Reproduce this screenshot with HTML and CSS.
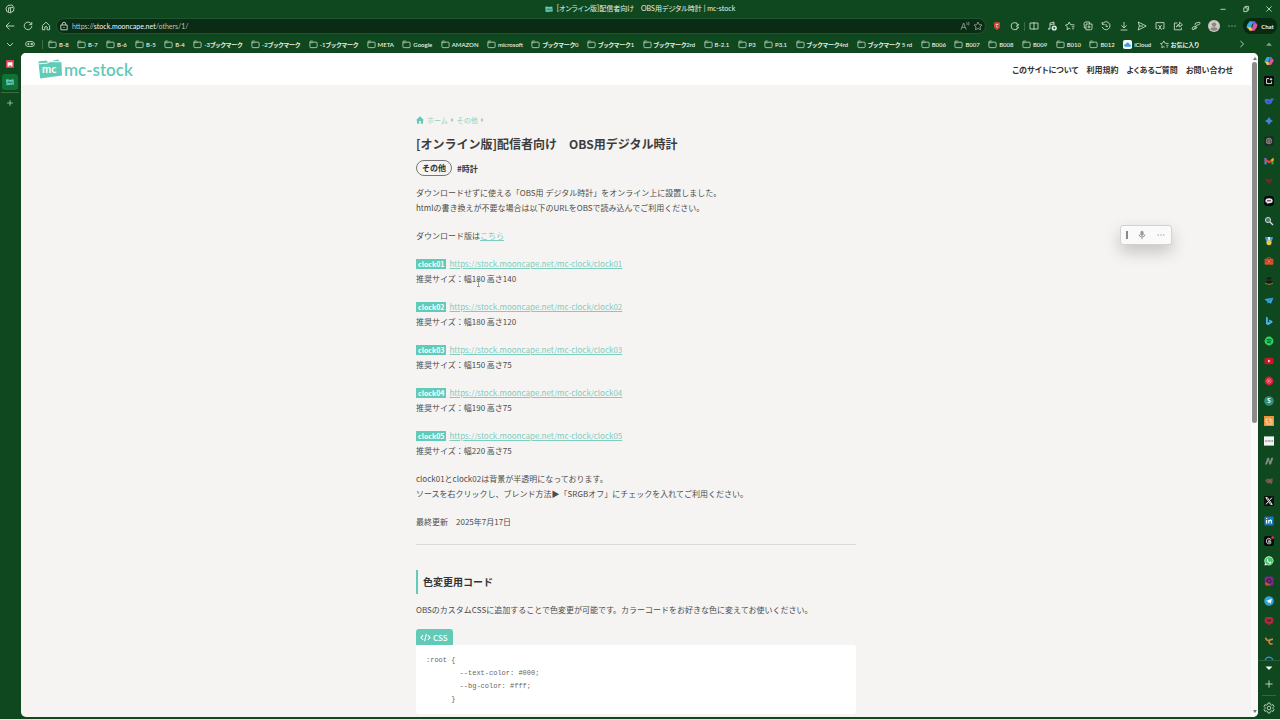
FILE: index.html
```html
<!DOCTYPE html>
<html lang="ja">
<head>
  <meta charset="UTF-8">
  <meta name="viewport" content="width=device-width, initial-scale=1.0">
  <title>[オンライン版]配信者向け　OBS用デジタル時計 | mc-stock</title>
  <link rel="stylesheet" href="styles.css">
</head>
<body>
  <svg class="defs" aria-hidden="true">
    <symbol id="folder" viewBox="0 0 10 10"><path d="M1 3V2.2Q1 1.2 2 1.2H3.8L5 2.4H8Q9 2.4 9 3.4V7.4Q9 8.5 8 8.5H2Q1 8.5 1 7.4V3H3.8L5 2.4"/></symbol>
    <symbol id="star" viewBox="0 0 10 10"><path d="M5 1L6.2 3.6L9 4L7 6L7.5 8.8L5 7.4L2.5 8.8L3 6L1 4L3.8 3.6Z"/></symbol>
    <symbol id="starlist" viewBox="0 0 10 10"><path d="M7 3.8L5.4 3.5L4.2 1L3 3.5L.5 4L2.4 5.9L2 8.7L4.2 7.4L5.4 8M6.8 3.8H9.5M6.8 5.8H9.5M7.2 7.8H9"/></symbol>
    <symbol id="mc" viewBox="0 0 10 8"><path fill="#62cbb8" d="M0 1L3 .6L4 1.4L9.4 .6L10 7.2L.6 8Z"/><path fill="none" stroke="#0f5a3a" stroke-width=".7" d="M2.4 5.6V4Q3.4 3 4 4V5.6M4 4Q5 3 5.6 4V5.6M8.4 4Q6.6 3.4 6.8 4.8Q7 6 8.4 5.2"/></symbol>
  </svg>

  <header class="titlebar">
    <svg class="icon workspace" viewBox="0 0 10 10"><path d="M3 1.4L7 1L9 3.6L8.6 7L5 9L1.6 7.4L1 4ZM3 4L8 3.4M3.6 4V8M5.6 4V8.4"/></svg>
    <div class="window-title"><svg class="favicon"><use href="#mc"/></svg><span>[オンライン版]配信者向け　OBS用デジタル時計 | mc-stock</span></div>
    <div class="window-buttons">
      <button aria-label="最小化"><svg class="icon" viewBox="0 0 10 10"><path d="M2.4 5.3H7.6"/></svg></button>
      <button aria-label="元に戻す"><svg class="icon" viewBox="0 0 10 10"><path d="M2.8 3.8H6.2V7.6H2.8ZM4 3.6V2.4H7.6V6.2H6.4"/></svg></button>
      <button aria-label="閉じる"><svg class="icon" viewBox="0 0 10 10"><path d="M2.4 2.4L7.6 7.6M7.6 2.4L2.4 7.6"/></svg></button>
    </div>
  </header>

  <div class="toolbar">
    <button aria-label="戻る"><svg class="icon" viewBox="0 0 10 10"><path d="M9.4 5H1M4.5 1.5L1 5L4.5 8.5"/></svg></button>
    <button aria-label="更新"><svg class="icon" viewBox="0 0 10 10"><path d="M8.5 3.4A3.8 3.8 0 1 0 8.8 5M8.8 1V3.6H6.2"/></svg></button>
    <button aria-label="ホーム"><svg class="icon" viewBox="0 0 10 10"><path d="M1.4 4.6L5 1.2L8.6 4.6V8.8H6.2V6Q5 5 3.8 6V8.8H1.4Z"/></svg></button>
    <div class="address">
      <svg class="icon" viewBox="0 0 10 10"><path d="M1.8 4H8.2V8.8H1.8ZM3.2 4V3Q3.4 1.2 5 1.2Q6.6 1.2 6.8 3V4M5 6V7"/></svg>
      <span class="url">https://<b>stock.mooncape.net</b>/others/1/</span>
      <svg class="icon dim" viewBox="0 0 10 10"><path d="M1 8.6L3.6 2L6.2 8.6M2 6.4H5.2M6.4 1.4Q7.6 2.6 7 4M8 .8Q9.6 2.4 8.8 4.4"/></svg>
      <svg class="icon dim"><use href="#star"/></svg>
    </div>
    <button aria-label="広告ブロック"><svg class="icon" viewBox="0 0 10 10"><path class="solid" fill="#c8463a" d="M2 1.6L5 1L8 1.6V6Q7 8.4 5 9Q3 8.4 2 6Z"/><path stroke="#f0d0b8" d="M3.6 3.4H6.4M4 5.4L6 6.4M6 2.8L4.4 4.6"/></svg></button>
    <button aria-label="拡張機能"><svg class="icon" viewBox="0 0 10 10"><path d="M6.8 3.4L6.6 1.8H3.4Q1.2 2 1.2 5Q1.2 8.4 3.8 8.6H6.8V7M7 3.4Q8.8 2.4 8.8 4Q8 4.6 6.8 4.6V6L8.6 6.2Q8.4 7.6 7 7.2"/></svg></button>
    <i class="divider"></i>
    <button aria-label="画面分割"><svg class="icon" viewBox="0 0 10 10"><path d="M1 2H9V8H1ZM5 1V9"/></svg></button>
    <button aria-label="メディア"><svg class="icon" viewBox="0 0 10 10"><path d="M3 7.5V2L7 1V4M3 3.8L7 2.8M1.2 8.2Q1.6 6.6 3 7.6Q2.6 9 1.2 8.2"/><circle class="solid" cx="7.2" cy="7" r="2.6" fill="#e8f3ea"/><path class="plus" d="M6 7H8.4M7.2 5.8V8.2"/></svg></button>
    <button aria-label="お気に入り"><svg class="icon"><use href="#starlist"/></svg></button>
    <button aria-label="コレクション"><svg class="icon" viewBox="0 0 10 10"><path d="M3 3H9V7.4Q9 8.8 7.6 8.8H3ZM3 7H1.4L1 2.4L2 1H6.6V3M6 4.4V7.4M4.5 5.9H7.5"/></svg></button>
    <button aria-label="履歴"><svg class="icon" viewBox="0 0 10 10"><path d="M1.4 3A4 4 0 1 1 1.2 6M1.2 1V3.4H3.6M5 3V5.4H7"/></svg></button>
    <button aria-label="ダウンロード"><svg class="icon" viewBox="0 0 10 10"><path d="M5 1V6.6M2.4 4.4L5 7L7.6 4.4M1.6 9H8.4"/></svg></button>
    <button aria-label="送信"><svg class="icon" viewBox="0 0 10 10"><path d="M1.2 1L9.2 5L1.2 9L2.4 5ZM2.4 5H6"/></svg></button>
    <button aria-label="スクリーンショット"><svg class="icon" viewBox="0 0 10 10"><path d="M2.4 7.6H1V1.6H9V7.6H7.6M3.4 4L6.6 8.8M6.6 4L3.4 8.8"/></svg></button>
    <button aria-label="共有"><svg class="icon" viewBox="0 0 10 10"><path d="M4.4 2H1.4V8.8H8.4V6.6M3.4 6Q4 3.4 6.6 3.2V1.2L9.4 3.8L6.6 6V4.6Q4.4 4.4 3.4 6"/></svg></button>
    <button aria-label="リンク"><svg class="icon" viewBox="0 0 10 10"><path d="M4.8 4.4L4 3.2Q4.2 1.6 6 1.8L8.6 1.2Q9.6 2 8.4 3.4L5.6 4.4L3 8.2Q1.4 9.2 1 8Q1 6 3.4 5.4L6 6.4Q5.6 8 3.4 8"/></svg></button>
    <button aria-label="プロフィール"><svg class="avatar" viewBox="0 0 12 12"><circle cx="6" cy="6" r="6" fill="#cfcac6"/><circle cx="6" cy="4.6" r="2.2" fill="#8c8783"/><path fill="#8c8783" d="M2.4 9.6Q2.6 7.2 6 7.2Q9.4 7.2 9.6 9.6Q6 12 2.4 9.6Z"/></svg></button>
    <button aria-label="設定など"><svg class="icon" viewBox="0 0 10 10"><path d="M1.4 5H2.6M4.4 5H5.6M7.4 5H8.6"/></svg></button>
    <button class="chat"><svg class="copilot" viewBox="0 0 10 10"><path fill="#35a9e0" d="M3 1H6L4 7H1Q0 6 1 4Z"/><path fill="#f6c945" d="M1 6H4.6L5.4 9H3.4Q2.4 9 2 7Z"/><path fill="#e0569b" d="M7 9H4.6L6 3H9Q10 4 9 6Z"/><path fill="#6f62e8" d="M6 1H7Q8 1 8.4 3L6.4 4L5 3Z"/></svg>Chat</button>
  </div>

  <nav class="bookmarks">
    <button class="chevron" aria-label="タブ"><svg class="icon" viewBox="0 0 10 10"><path d="M2 4L5 7L8 4"/></svg></button>
    <svg class="icon game" viewBox="0 0 10 10"><path d="M2.6 2.6H7.4Q9.4 3 9.4 5.4Q9 7.6 7 7.4H3Q1 7.6 .6 5.4Q.6 3 2.6 2.6ZM2.4 5H4.4M3.4 4V6M6 4.4H7.6V5.6H6Z"/></svg>
    <i class="divider"></i>
    <div class="bookmark-list">
      <a href="#"><svg class="icon"><use href="#folder"/></svg>B-8</a>
      <a href="#"><svg class="icon"><use href="#folder"/></svg>B-7</a>
      <a href="#"><svg class="icon"><use href="#folder"/></svg>B-6</a>
      <a href="#"><svg class="icon"><use href="#folder"/></svg>B-5</a>
      <a href="#"><svg class="icon"><use href="#folder"/></svg>B-4</a>
      <a href="#"><svg class="icon"><use href="#folder"/></svg>-3ブックマーク</a>
      <a href="#"><svg class="icon"><use href="#folder"/></svg>-2ブックマーク</a>
      <a href="#"><svg class="icon"><use href="#folder"/></svg>-1ブックマーク</a>
      <a href="#"><svg class="icon"><use href="#folder"/></svg>META</a>
      <a href="#"><svg class="icon"><use href="#folder"/></svg>Google</a>
      <a href="#"><svg class="icon"><use href="#folder"/></svg>AMAZON</a>
      <a href="#"><svg class="icon"><use href="#folder"/></svg>microsoft</a>
      <a href="#"><svg class="icon"><use href="#folder"/></svg>ブックマーク0</a>
      <a href="#"><svg class="icon"><use href="#folder"/></svg>ブックマーク1</a>
      <a href="#"><svg class="icon"><use href="#folder"/></svg>ブックマーク2rd</a>
      <a href="#"><svg class="icon"><use href="#folder"/></svg>B-2.1</a>
      <a href="#"><svg class="icon"><use href="#folder"/></svg>P3</a>
      <a href="#"><svg class="icon"><use href="#folder"/></svg>P3.1</a>
      <a href="#"><svg class="icon"><use href="#folder"/></svg>ブックマーク4rd</a>
      <a href="#"><svg class="icon"><use href="#folder"/></svg>ブックマーク 5 rd</a>
      <a href="#"><svg class="icon"><use href="#folder"/></svg>B006</a>
      <a href="#"><svg class="icon"><use href="#folder"/></svg>B007</a>
      <a href="#"><svg class="icon"><use href="#folder"/></svg>B008</a>
      <a href="#"><svg class="icon"><use href="#folder"/></svg>B009</a>
      <a href="#"><svg class="icon"><use href="#folder"/></svg>B010</a>
      <a href="#"><svg class="icon"><use href="#folder"/></svg>B012</a>
      <a href="#"><svg class="cloud" viewBox="0 0 10 10"><rect width="10" height="10" rx="2" fill="#f4f8fb"/><path fill="#3f9fe0" d="M2.4 7.6Q.8 7 1.4 5.4Q2 4.4 3 4.6Q4 2.4 6 3Q7.2 3.6 7.2 4.8Q9 5 8.8 6.6Q8.4 7.6 7.6 7.6Z"/></svg>iCloud</a>
      <a href="#"><svg class="icon"><use href="#starlist"/></svg>お気に入り</a>
    </div>
    <button class="more" aria-label="その他のブックマーク"><svg class="icon" viewBox="0 0 10 10"><path d="M3.4 2L6.6 5L3.4 8"/></svg></button>
    <button class="up" aria-label="上へ"><svg class="icon" viewBox="0 0 10 10"><path class="solid" fill="#7fa287" d="M2 6.8L5 3.4L8 6.8Z"/></svg></button>
  </nav>

  <div class="workspace-row">
    <aside class="tabs">
      <button aria-label="タブ1"><svg viewBox="0 0 10 10"><rect width="10" height="10" rx="1" fill="#d8414d"/><path fill="#fff" d="M2 2.4L4 3.2L5 2.4L6 3.2L8 2.4V8H6.4V6.4H5.6V8H4.4V6.4H3.6V8H2Z"/></svg></button>
      <button class="active" aria-label="mc-stock"><svg class="tab-logo"><use href="#mc"/></svg></button>
      <button class="new" aria-label="新しいタブ"><svg class="icon" viewBox="0 0 10 10"><path d="M5 1.4V8.6M1.4 5H8.6"/></svg></button>
    </aside>

    <div class="view">
      <div class="page">
        <div class="site-header">
          <a class="logo" href="#">
            <svg viewBox="0 0 24 20"><path fill="#62cbb8" d="M.4 2.6L8 1.4L10 3L19.6 .6L22.2 2.6L23.4 3L24 16.4L2.2 19.4Z"/><path fill="none" stroke="#fff" d="M1 4.8L9.6 4L12 2.6L22.6 2.8"/><text x="4" y="14">mc</text></svg>
            <span>mc-stock</span>
          </a>
          <nav class="site-nav">
            <a href="#">このサイトについて</a>
            <a href="#">利用規約</a>
            <a href="#">よくあるご質問</a>
            <a href="#">お問い合わせ</a>
          </nav>
        </div>

        <main>
          <nav class="breadcrumb">
            <svg viewBox="0 0 10 10"><path d="M5 .4L10 5.2H8.8V9.6H6V6.4H4V9.6H1.2V5.2H0Z"/></svg>
            <a href="#">ホーム</a><i></i>
            <a href="#">その他</a><i></i>
          </nav>
          <h1>[オンライン版]配信者向け　OBS用デジタル時計</h1>
          <div class="tags"><a class="category" href="#">その他</a><a href="#">#時計</a></div>

          <div class="entry">
            <p>ダウンロードせずに使える「OBS用 デジタル時計」をオンライン上に設置しました。<br>htmlの書き換えが不要な場合は以下のURLをOBSで読み込んでご利用ください。</p>
            <p>ダウンロード版は<a href="#">こちら</a></p>
            <p><span class="label">clock01</span><a href="#">https://stock.mooncape.net/mc-clock/clock01</a><br>推奨サイズ：幅180 高さ140</p>
            <p><span class="label">clock02</span><a href="#">https://stock.mooncape.net/mc-clock/clock02</a><br>推奨サイズ：幅180 高さ120</p>
            <p><span class="label">clock03</span><a href="#">https://stock.mooncape.net/mc-clock/clock03</a><br>推奨サイズ：幅150 高さ75</p>
            <p><span class="label">clock04</span><a href="#">https://stock.mooncape.net/mc-clock/clock04</a><br>推奨サイズ：幅190 高さ75</p>
            <p><span class="label">clock05</span><a href="#">https://stock.mooncape.net/mc-clock/clock05</a><br>推奨サイズ：幅220 高さ75</p>
            <p>clock01とclock02は背景が半透明になっております。<br>ソースを右クリックし、ブレンド方法▶「SRGBオフ」にチェックを入れてご利用ください。</p>
            <p>最終更新　2025年7月17日</p>
          </div>

          <hr>

          <h2>色変更用コード</h2>
          <p>OBSのカスタムCSSに追加することで色変更が可能です。カラーコードをお好きな色に変えてお使いください。</p>
          <div class="code-tab"><svg viewBox="0 0 12 10"><path d="M3.4 2.4L1 5L3.4 7.6M8.6 2.4L11 5L8.6 7.6M7 1L5 9"/></svg>CSS</div>
          <pre>:root {
        --text-color: #000;
        --bg-color: #fff;
      }</pre>
        </main>
      </div>
      <div class="scrollbar"><i class="arrow-up"></i><div class="thumb"></div><i class="arrow-down"></i></div>
    </div>

    <aside class="sidebar">
      <div class="apps">
        <svg viewBox="0 0 10 10"><path fill="#35a9e0" d="M3 1H6L4 7H1Q0 6 1 4Z"/><path fill="#f6c945" d="M1 6H4.6L5.4 9H3.4Q2.4 9 2 7Z"/><path fill="#e0569b" d="M7 9H4.6L6 3H9Q10 4 9 6Z"/><path fill="#6f62e8" d="M6 1H7Q8 1 8.4 3L6.4 4L5 3Z"/></svg>
        <svg viewBox="0 0 10 10"><rect width="10" height="10" rx="1" fill="#080d0a"/><path fill="none" stroke="#ddd" d="M5 2.6H2.6V7.6H7.6V5.4"/><path fill="#fff" d="M7 1.6L7.5 2.8L8.6 3.3L7.5 3.8L7 5L6.5 3.8L5.4 3.3L6.5 2.8Z"/></svg>
        <svg viewBox="0 0 10 10"><path fill="#3d68d8" d="M.6 3.6Q3 1.8 5.8 3.4Q7 4 7.2 2L8.4 2.6L9.8 2Q9.6 4.4 8.4 5Q8 8.6 4.6 8.4Q.4 8 .6 3.6Z"/><path fill="#164b42" d="M3 5Q4.8 4.6 5.8 6.6Q4 6.6 3 5Z"/></svg>
        <svg viewBox="0 0 10 10"><path fill="#4285d8" d="M5 1L6.6 3.4L9 5L6.6 6.6L5 9L3.4 6.6L1 5L3.4 3.4Z"/></svg>
        <svg viewBox="0 0 10 10"><rect x=".5" y=".5" width="9" height="9" rx="1" fill="#1c2820"/><circle cx="5" cy="5" r="3.2" fill="#858b83"/><path fill="none" stroke="#283129" stroke-width=".5" d="M3 4L5 3L7 4V6L5 7L3 6ZM3 4L7 6"/></svg>
        <svg viewBox="0 0 10 10"><path fill="#4285f4" d="M.5 2H2.6V8.4H.5Z"/><path fill="#34a853" d="M7.4 3H9.5V8.4H7.4Z"/><path fill="#ea4335" d="M.5 2L5 5L9.5 2V4.4L5 7.4L.5 4.4Z"/><path fill="#fbbc04" d="M7.4 3.2L9.5 1.8V4.4L7.4 5.6Z"/></svg>
        <svg viewBox="0 0 10 10"><path fill="#7a2430" d="M1 2.4L4 3L5 4L6 3L9 2.4L7.6 5L5 8L2.4 5Z"/></svg>
        <svg viewBox="0 0 10 10"><rect width="10" height="10" rx="3" fill="#0a0a0c"/><path fill="#eee7f0" d="M2 3Q5 1.4 8 3Q9.4 5 8 6.6Q6.4 7.4 5 7L3.4 8.2V7Q1 6.4 1.4 4.4Z"/><path stroke="#333" d="M3 4.8H7"/></svg>
        <svg viewBox="0 0 10 10"><circle cx="4" cy="4" r="2.6" fill="#4a7d78" stroke="#c6d3cd"/><path stroke="#d5ded7" stroke-width="1.4" d="M6 6L9 9"/></svg>
        <svg viewBox="0 0 10 10"><path fill="#3d9ce8" d="M1 1H4L5 4L6 1H9L8 5H2Z"/><path fill="#f2f6f8" d="M4 1H6L5.8 4H4.2Z"/><circle cx="5" cy="6.6" r="2.6" fill="#f0c64a"/></svg>
        <svg viewBox="0 0 10 10"><path fill="none" stroke="#b64429" d="M3.4 3V1.6H6.6V3"/><rect x=".6" y="2.8" width="8.8" height="6" rx="1" fill="#d5532f"/><path stroke="#8b2f20" stroke-width=".5" d="M.6 5.4H9.4"/><path stroke="#f3d0c0" d="M4.4 5.6H5.6"/></svg>
        <svg viewBox="0 0 10 10"><path fill="#151914" d="M2.4 4L3 1.4H7L7.6 4V7H2.4Z"/><path fill="none" stroke="#8a7430" d="M1 7.4Q5 9.6 9 7.4"/><path stroke="#403c28" d="M2 4H8"/></svg>
        <svg viewBox="0 0 10 10"><path fill="#38a7df" d="M.4 3L9.4 1.8L7 7.8L4.6 6.4L3.8 7.8L3 5.6Z"/><path stroke="#1474a6" stroke-width=".6" d="M3 5.4L7.4 3.2"/></svg>
        <svg viewBox="0 0 10 10"><path fill="#48b3ee" d="M2 .8L3.8 1.4V6.4L6 5.6L4.8 4.6L4.4 3.4L8.4 5V6.6L4 9.2L2 8Z"/></svg>
        <svg viewBox="0 0 10 10"><circle cx="5" cy="5" r="4.4" fill="#2bd566"/><path fill="none" stroke="#0b3c1b" stroke-width=".8" d="M2.4 3.6Q5.4 2.8 7.8 4M2.8 5.2Q5 4.6 7.2 5.6M3 6.6Q5 6.2 6.6 7"/></svg>
        <svg viewBox="0 0 10 10"><rect x=".4" y="1.8" width="9.2" height="6.4" rx="1.6" fill="#c71624"/><path fill="#fff" d="M4.2 3.6L6.4 5L4.2 6.4Z"/></svg>
        <svg viewBox="0 0 10 10"><circle cx="5" cy="5" r="4.4" fill="#d61d35"/><circle cx="5" cy="5" r="2.2" fill="none" stroke="#f1a9af" stroke-width=".6"/><path fill="#fff" d="M4.4 4L6 5L4.4 6Z"/></svg>
        <svg viewBox="0 0 10 10"><circle cx="5" cy="5" r="4.8" fill="#2f9080"/><text x="3" y="7">S</text></svg>
        <svg viewBox="0 0 10 10"><rect width="10" height="10" fill="#e9963b"/><path fill="none" stroke="#fff3e4" stroke-width=".8" d="M4.4 3H2V6H4.4M6 2V6M8.6 4H6.4M6.4 6H8.8M2 8H8.6"/></svg>
        <svg viewBox="0 0 10 10"><rect y=".4" width="10" height="9.2" fill="#f2f4f2"/><path stroke="#59625b" stroke-dasharray="1 .4" d="M1 5H9"/></svg>
        <svg viewBox="0 0 10 10"><path fill="#838b85" d="M1 8.4L3.4 1.8H5L5.8 5.8L7.2 1.8H9.4L7 8.4H5.2L4.4 4.6L3 8.4Z"/></svg>
        <svg viewBox="0 0 10 10"><path fill="#70594b" d="M1 4L4 2.4L6 3L8.4 2L8.8 5L7.6 8.4L6 7L3.4 7.4Z"/><path stroke="#c35d55" d="M5 4.6L7.4 6.4"/></svg>
        <svg viewBox="0 0 10 10"><rect width="10" height="10" rx="1" fill="#0b120e"/><path fill="none" stroke="#f2f2f2" d="M1.8 1.6H3.4L8.2 8.4H6.6ZM8 1.6L5.6 4.4M4.4 5.6L2 8.4"/></svg>
        <svg viewBox="0 0 10 10"><rect x=".4" y=".4" width="9.2" height="9.2" rx="1" fill="#1978b8"/><path fill="none" stroke="#fff" stroke-width="1.2" d="M2.6 4V7.6M2.6 2V3M4.8 7.6V4M4.8 5Q7.6 3 7.4 5.4V7.6"/></svg>
        <svg viewBox="0 0 10 10"><rect width="10" height="10" rx="2" fill="#080a09"/><path fill="none" stroke="#eee" stroke-width=".8" d="M7 4Q6.4 2 4.6 2.2Q2.4 2.6 2.4 5Q2.6 8 5 8Q7.6 7.6 7 5.8Q6 4.4 4.4 5.2Q3.8 6.4 5 6.6Q6.4 6.4 6 4.6Q5.4 3.4 4.2 4"/><circle cx="8.6" cy="1.6" r="1.5" fill="#cc3448"/></svg>
        <svg viewBox="0 0 10 10"><path fill="#d9f2df" d="M.4 9.6L1 7.2A4.6 4.6 0 1 1 3 9Z"/><circle cx="5" cy="5" r="3.8" fill="#39cb62"/><path fill="#fff" d="M3.6 2.6L4.4 4L4 4.8Q4.6 6 5.6 6.2L6.2 5.6L7.6 6.2Q7 7.6 5.6 7.4Q3 6.8 2.8 4Z"/></svg>
        <svg viewBox="0 0 10 10"><rect x=".6" y=".6" width="8.8" height="8.8" rx="2" fill="#792b88"/><path fill="#d0502f" d="M1.4 6.4Q5 6 6.4 9.4H2.4Q1 9 1.4 6.4Z"/><circle cx="5" cy="5" r="2" fill="none" stroke="#271f32"/></svg>
        <svg viewBox="0 0 10 10"><circle cx="5" cy="5" r="4.8" fill="#2ea6dd"/><path fill="#fff" d="M1.8 5L7.8 2.8L6.8 7.4L5 6.2L4.2 7L4 5.6Z"/></svg>
        <svg viewBox="0 0 10 10"><path fill="#aa2c3a" d="M2 1H8L9.6 3.4L9 7L6.4 8L5 9.4L3.6 8L1 7L.4 3.4Z"/><path fill="#5f1a28" d="M2.6 3L5 4L7.4 3L6.4 5.4H3.6Z"/></svg>
        <svg viewBox="0 0 10 10"><path fill="none" stroke="#cf8747" stroke-width="1.6" d="M1.6 1.6Q2 4.4 5 4.6M9 3.4Q5.4 3 5 6Q5.4 8.6 8.6 7.8"/></svg>
        <svg viewBox="0 0 10 10"><circle cx="5" cy="5" r="3.8" fill="#123047" stroke="#3190c4" stroke-width="1.4"/></svg>
      </div>
      <div class="sidebar-footer">
        <svg viewBox="0 0 10 10"><path fill="#fff" d="M1.6 3.4H8.4L5 7Z"/></svg>
        <svg class="icon" viewBox="0 0 10 10"><path d="M5 1.4V8.6M1.4 5H8.6"/></svg>
        <i></i>
        <svg class="icon gear" viewBox="0 0 12 12"><path d="M5 1H7L7.4 2.6L8.6 3.2L10 2.6L11 4.4L10 5.4V6.6L11 7.6L10 9.4L8.6 8.8L7.4 9.4L7 11H5L4.6 9.4L3.4 8.8L2 9.4L1 7.6L2 6.6V5.4L1 4.4L2 2.6L3.4 3.2L4.6 2.6Z"/><circle cx="6" cy="6" r="1.8"/></svg>
      </div>
    </aside>
  </div>

  <div class="voice-bar">
    <i></i>
    <button aria-label="マイク"><svg viewBox="0 0 10 10"><rect x="3.4" y=".8" width="3.2" height="5" rx="1.6" fill="#999"/><path fill="none" stroke="#999" d="M2 4.4Q2.2 7 5 7Q7.8 7 8 4.4M5 7V9.2"/></svg></button>
    <button aria-label="メニュー"><svg viewBox="0 0 10 10"><path fill="#999" d="M1.6 4.5H3V5.5H1.6ZM4.3 4.5H5.7V5.5H4.3ZM7 4.5H8.4V5.5H7Z"/></svg></button>
  </div>
  <svg class="cursor" viewBox="0 0 5 8"><path d="M1 .5H4M2.5 .5V7.5M1 7.5H4"/></svg>
</body>
</html>
```

FILE: styles.css
```css
* {
  box-sizing: border-box;
}
body {
  margin: 0;
  height: 100vh;
  display: flex;
  flex-direction: column;
  overflow: hidden;
  background-color: #0f471e;
  border-bottom: 1px solid #dfe8e0;
  color: #4c4c4c;
  font-family: "Noto Sans CJK JP", sans-serif;
  font-size: 8px;
  line-height: 15px;
}
a {
  color: inherit;
  text-decoration: none;
}
button {
  display: flex;
  align-items: center;
  justify-content: center;
  padding: 0;
  border: none;
  background: none;
  color: inherit;
  font: inherit;
  cursor: pointer;
}
svg {
  display: block;
  flex: none;
  width: 10px;
  height: 10px;
}
.defs {
  position: absolute;
  width: 0;
  height: 0;
}
.icon {
  fill: none;
  stroke: #c3dcc8;
  stroke-width: 0.9;
}
.icon .solid {
  stroke: none;
}
.icon .plus {
  stroke: #0f471e;
}
.divider {
  width: 1px;
  height: 9px;
  background-color: #3b6a46;
}

/* browser frame */
.titlebar,
.toolbar,
.bookmarks {
  display: flex;
  align-items: center;
  flex: none;
  color: #e6f1e8;
  font-family: Lato, "Noto Sans CJK JP", sans-serif;
  font-feature-settings: "palt";
}
.titlebar {
  height: 17px;
  padding-left: 5px;
}
.window-title {
  flex: 1;
  display: flex;
  align-items: center;
  justify-content: center;
  gap: 4px;
  padding-left: 54px;
  font-size: 7px;
}
.favicon {
  width: 8px;
  height: 6px;
}
.window-buttons {
  display: flex;
}
.window-buttons button {
  width: 23px;
  height: 17px;
}
.toolbar {
  height: 18px;
  padding: 0 3px 0 1px;
}
.toolbar button {
  width: 18px;
  height: 18px;
}
.address {
  flex: 1;
  display: flex;
  align-items: center;
  gap: 3px;
  height: 16px;
  margin: 0 2px 0 1px;
  padding: 0 2px;
  border: 1px solid #1f5430;
  border-radius: 8px;
  background-color: #0a2b14;
}
.url {
  flex: 1;
  color: #b8c9bc;
  font-size: 7px;
}
.url b {
  color: #f3f8f4;
  font-weight: normal;
}
.dim {
  stroke: #8aa08f;
}
.avatar {
  width: 12px;
  height: 12px;
}
.toolbar .chat {
  width: 34px;
  height: 16px;
  margin-left: 2px;
  gap: 3px;
  border-radius: 8px;
  background-color: #082a11;
  font-size: 6px;
  font-weight: bold;
}
.copilot {
  width: 12px;
  height: 12px;
}
.bookmarks {
  height: 18px;
}
.chevron {
  width: 20px;
  height: 18px;
}
.game {
  margin: 0 7px 0 5px;
}
.bookmark-list {
  flex: 1;
  display: flex;
  justify-content: space-between;
  padding: 0 34px 0 5px;
  font-size: 6px;
  font-weight: 600;
  white-space: nowrap;
}
.bookmark-list a {
  display: flex;
  align-items: center;
  gap: 2px;
}
.bookmark-list a svg {
  width: 9px;
  height: 9px;
}
.more {
  width: 17px;
}
.up {
  width: 22px;
  margin-left: 8px;
}

/* tabs on the left */
.workspace-row {
  flex: 1;
  display: flex;
  min-height: 0;
  padding-bottom: 2px;
}
.tabs {
  width: 21px;
  display: flex;
  flex-direction: column;
  align-items: center;
  padding: 3px 3px 0 2px;
}
.tabs button {
  width: 16px;
  height: 16px;
}
.tabs button svg {
  width: 8px;
  height: 8px;
}
.tabs .active {
  margin: 2px 0;
  border-radius: 3px;
  background-color: #0f7338;
}
.tabs .new {
  width: 18px;
  height: 20px;
  border-top: 1px solid #3d6b48;
}

/* web page */
.view {
  flex: 1;
  display: flex;
  min-width: 0;
  border-radius: 5px;
  overflow: hidden;
  background-color: #f5f4f2;
}
.page {
  flex: 1;
  overflow: hidden;
}
.site-header {
  display: flex;
  align-items: center;
  justify-content: space-between;
  height: 32px;
  padding: 0 18px 0 17px;
  background-color: #fff;
}
.logo {
  display: flex;
  align-items: center;
  gap: 2px;
  color: #62c8b5;
  font-family: Lato, sans-serif;
  font-size: 17px;
  font-weight: 600;
}
.logo svg {
  width: 24px;
  height: 20px;
}
.logo text {
  fill: #fff;
  font-size: 11px;
  font-weight: bold;
}
.site-nav {
  display: flex;
  gap: 8px;
  color: #333;
  font-feature-settings: "palt";
  font-weight: bold;
}
main {
  width: 440px;
  margin: 0 auto;
  padding-top: 29px;
}
.breadcrumb {
  display: flex;
  align-items: center;
  gap: 3px;
  color: #8fd0c3;
  font-size: 7px;
  line-height: 12px;
}
.breadcrumb svg {
  width: 8px;
  height: 8px;
  fill: #62cbb8;
}
.breadcrumb i {
  border: 2px solid transparent;
  border-left: 3px solid #9bcfc5;
  border-right: none;
}
h1 {
  margin: 9px 0 7px;
  color: #3d3d3d;
  font-size: 12px;
  line-height: 18px;
}
.tags {
  display: flex;
  align-items: center;
  gap: 5px;
  margin-bottom: 9px;
  color: #333;
  font-weight: bold;
}
.category {
  padding: 0 5px;
  border: 1px solid #777;
  border-radius: 8px;
  line-height: 14px;
}
p {
  margin: 0;
}
.entry {
  display: flex;
  flex-direction: column;
  gap: 13px;
}
.entry a {
  color: #7fcdbe;
  text-decoration: underline;
}
.label {
  display: inline-block;
  margin-right: 3px;
  padding: 0 2px;
  background-color: #62cbb8;
  color: #fff;
  font-size: 7px;
  font-weight: bold;
  line-height: 10px;
}
hr {
  margin: 15px 0 25px;
  border: none;
  border-top: 1px solid #d9d9d9;
}
h2 {
  margin: 0 0 8px;
  padding-left: 5px;
  border-left: 2px solid #62cbb8;
  color: #333;
  font-size: 10px;
  line-height: 24px;
}
.code-tab {
  display: flex;
  align-items: center;
  gap: 2px;
  width: max-content;
  height: 16px;
  margin-top: 12px;
  padding: 0 5px 0 4px;
  border-radius: 3px 3px 0 0;
  background-color: #62cbb8;
  color: #fff;
  font-weight: 500;
}
.code-tab svg {
  width: 11px;
  height: 9px;
  fill: none;
  stroke: #fff;
  stroke-width: 1.2;
}
pre {
  margin: 0;
  padding: 9px 10px 8px;
  border-radius: 0 3px 3px 3px;
  background-color: #fff;
  color: #666;
  font-family: "Liberation Mono", monospace;
  font-size: 7px;
  line-height: 13px;
}
.scrollbar {
  width: 7px;
  display: flex;
  flex-direction: column;
  align-items: center;
  padding: 4px 0;
  background-color: #fafafa;
}
.arrow-up,
.arrow-down {
  border: 2px solid transparent;
}
.arrow-up {
  border-top: none;
  border-bottom: 3px solid #777;
}
.arrow-down {
  margin-top: auto;
  border-bottom: none;
  border-top: 3px solid #777;
}
.thumb {
  width: 5px;
  height: 55%;
  margin-top: 2px;
  border-radius: 3px;
  background-color: #8b8b8b;
}

/* app icons on the right */
.sidebar {
  width: 22px;
  display: flex;
  flex-direction: column;
}
.apps {
  flex: 1;
  display: flex;
  flex-direction: column;
  align-items: center;
  gap: 10px;
  min-height: 0;
  padding-top: 3px;
  overflow: hidden;
}
.apps text {
  fill: #fff;
  font-size: 6px;
  font-weight: bold;
}
.sidebar-footer {
  display: flex;
  flex-direction: column;
  align-items: center;
  gap: 6px;
  padding: 2px 0 3px;
  border-top: 1px solid #2a5f37;
}
.sidebar-footer i {
  width: 14px;
  height: 1px;
  background-color: #34663f;
}
.sidebar-footer .gear {
  width: 12px;
  height: 12px;
}

/* floating controls */
.voice-bar {
  position: absolute;
  top: 225px;
  right: 108px;
  display: flex;
  align-items: center;
  height: 20px;
  padding: 0 5px;
  gap: 9px;
  border: 1px solid #d2d2d2;
  border-radius: 3px;
  background-color: #fafafa;
  box-shadow: 0 7px 16px rgba(0, 0, 0, 0.2);
}
.voice-bar i {
  width: 2px;
  height: 8px;
  background-color: #888;
}
.cursor {
  position: absolute;
  top: 279px;
  left: 476px;
  width: 5px;
  height: 8px;
  fill: none;
  stroke: #777;
  stroke-width: 0.7;
}
```
